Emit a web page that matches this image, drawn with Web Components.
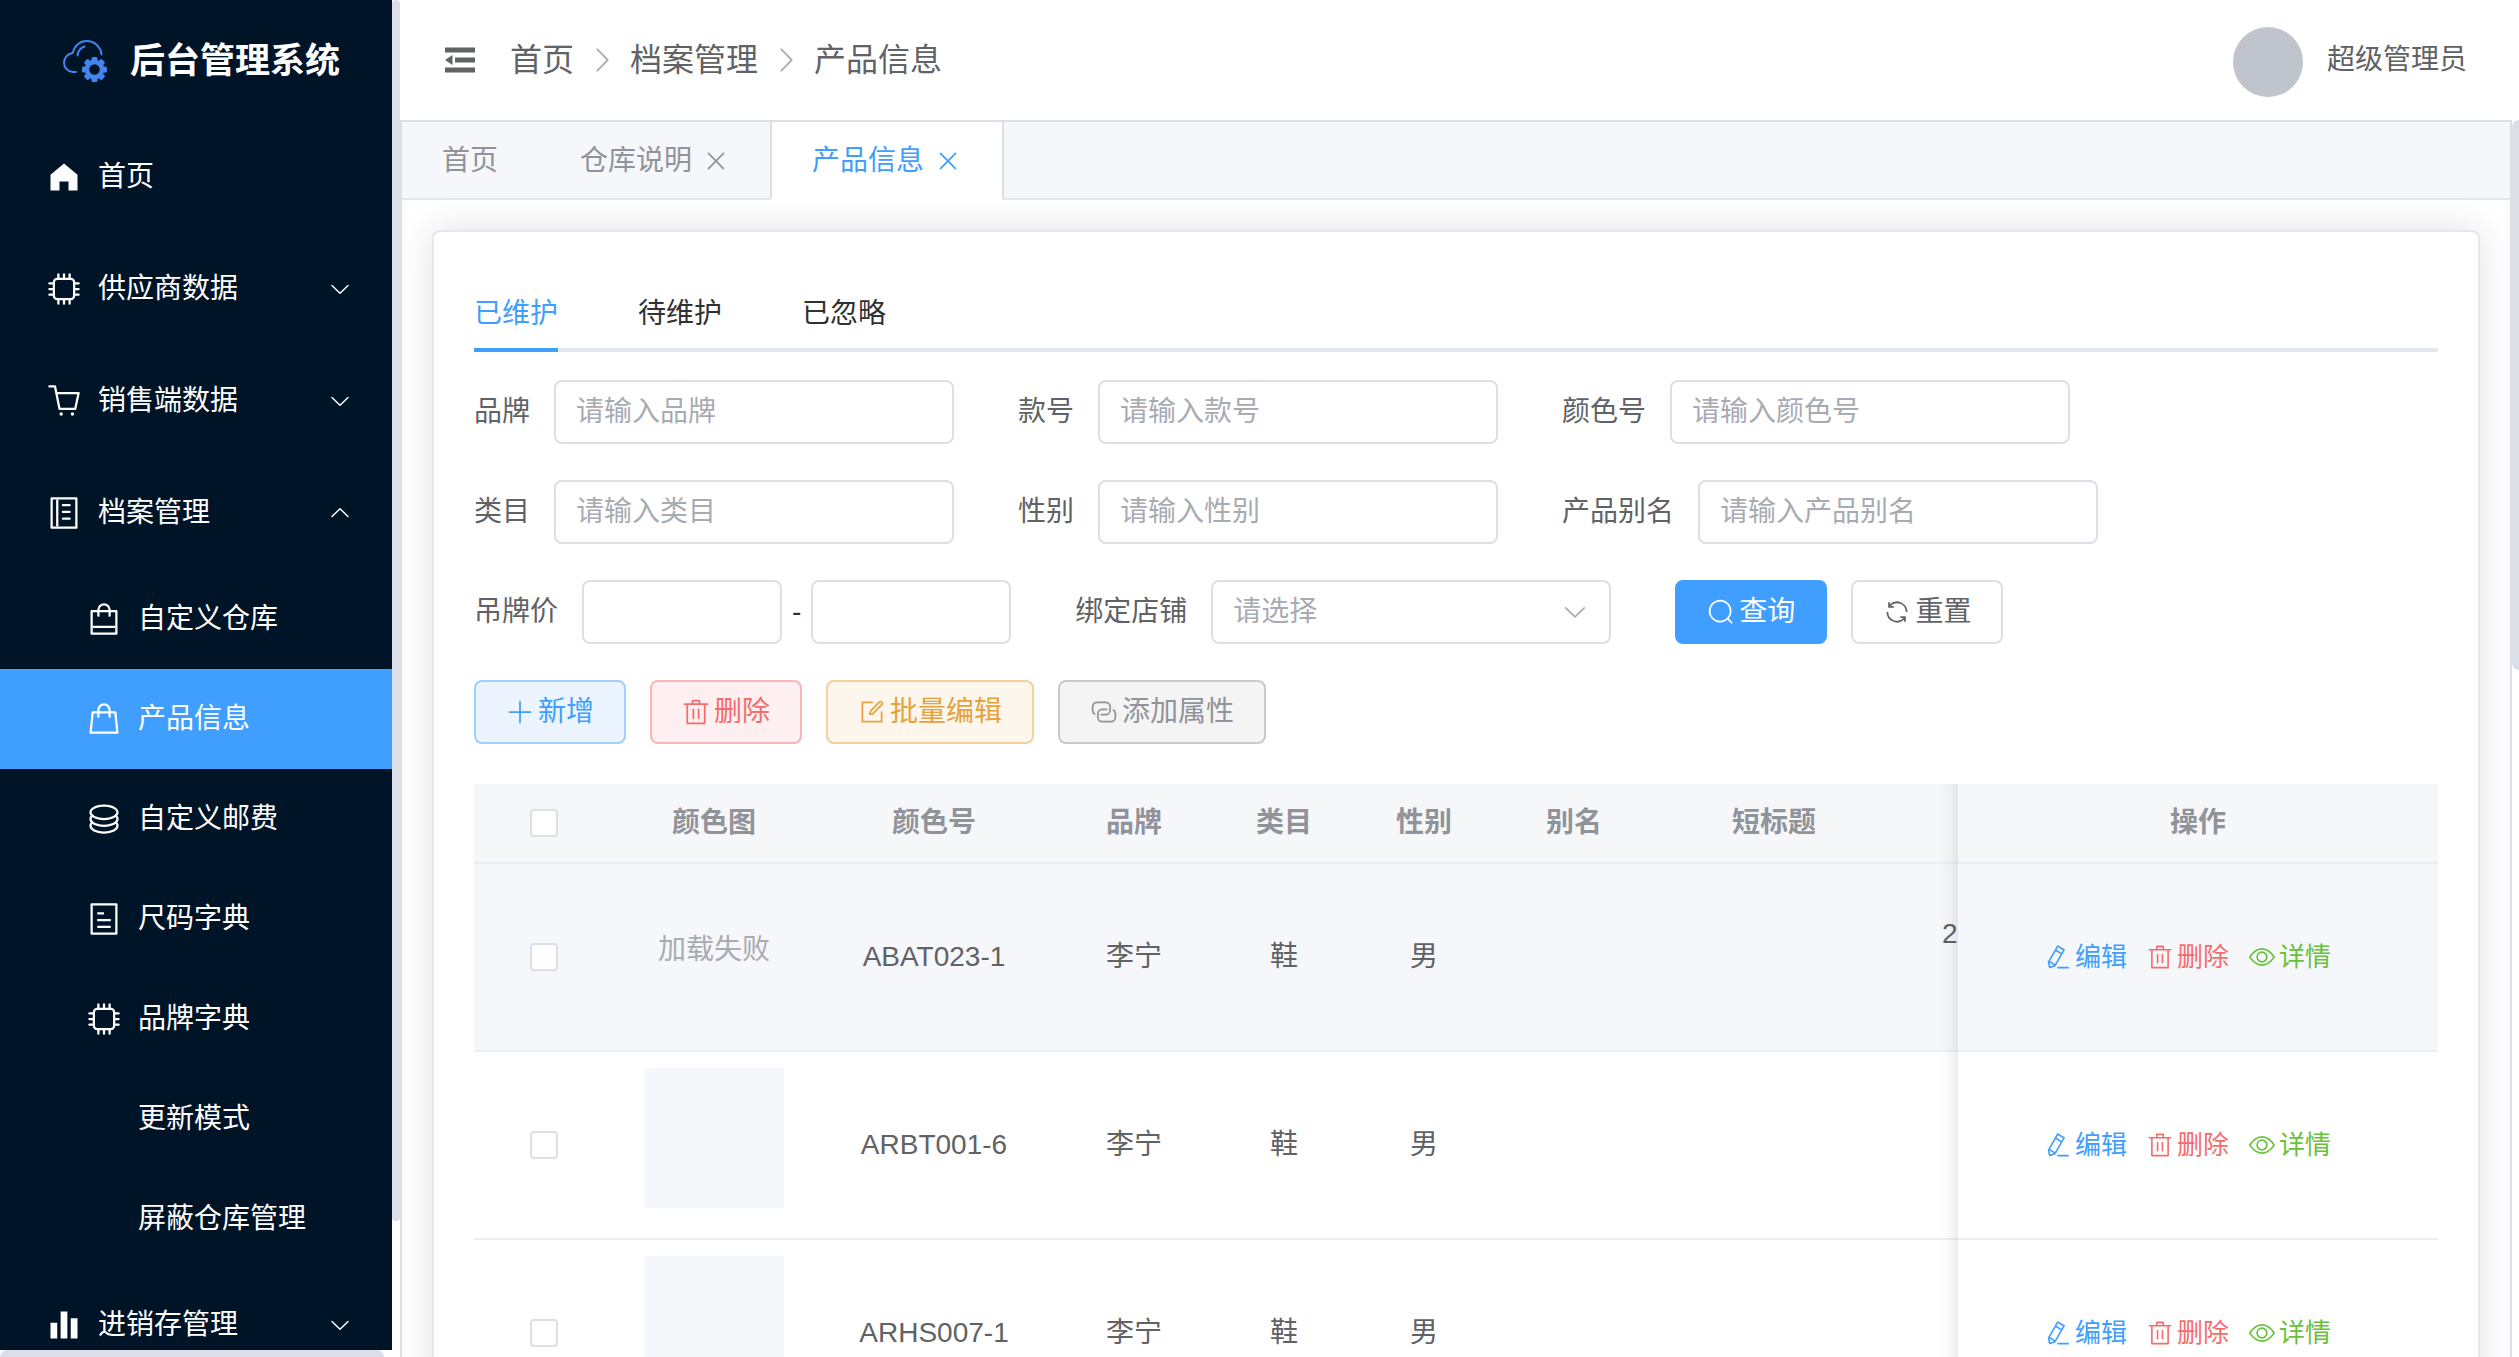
<!DOCTYPE html>
<html lang="zh-CN">
<head>
<meta charset="utf-8">
<title>后台管理系统</title>
<style>
  html, body { height: 100%; margin: 0; }
  body {
    --primary: #409eff;
    --text: #606266;
    --text-strong: #303133;
    --muted: #909399;
    --placeholder: #a8abb2;
    --line: #dcdfe6;
    --line-light: #e4e7ed;
    --line-row: #ebeef5;
    --fill: #f5f7fb;
    --thumb: #dbe0e8;
    overflow: hidden;
    background: #fff;
    color: var(--text);
    font: 28px/46px "Liberation Sans", "Noto Sans CJK SC", sans-serif;
  }
</style>
</head>
<body>
<admin-shell>
  <side-bar slot="side"></side-bar>
  <top-bar slot="top"></top-bar>
  <page-tabs slot="tabs"></page-tabs>
  <content-card>
    <status-tabs></status-tabs>
    <filter-form></filter-form>
    <product-table></product-table>
  </content-card>
</admin-shell>

<script>
const ICONS = {
  down: '<path d="M831.872 340.864 512 652.672 192.128 340.864a30.592 30.592 0 0 0-42.752 0 29.12 29.12 0 0 0 0 41.6L489.664 714.24a32 32 0 0 0 44.672 0l340.288-331.712a29.12 29.12 0 0 0 0-41.728 30.592 30.592 0 0 0-42.752 0z"/>',
  up: '<path transform="rotate(180 512 512)" d="M831.872 340.864 512 652.672 192.128 340.864a30.592 30.592 0 0 0-42.752 0 29.12 29.12 0 0 0 0 41.6L489.664 714.24a32 32 0 0 0 44.672 0l340.288-331.712a29.12 29.12 0 0 0 0-41.728 30.592 30.592 0 0 0-42.752 0z"/>',
  right: '<path d="M340.864 149.312a30.592 30.592 0 0 0 0 42.752L652.736 512 340.864 831.872a30.592 30.592 0 0 0 0 42.752 29.12 29.12 0 0 0 41.728 0L714.24 534.336a32 32 0 0 0 0-44.672L382.592 149.376a29.12 29.12 0 0 0-41.728 0z"/>',
  close: '<path d="M764.288 214.592 512 466.88 259.712 214.592a31.936 31.936 0 0 0-45.12 45.12L466.752 512 214.528 764.224a31.936 31.936 0 1 0 45.12 45.184L512 557.184l252.288 252.288a31.936 31.936 0 0 0 45.12-45.12L557.12 512.064l252.288-252.352a31.936 31.936 0 1 0-45.12-45.184z"/>',
  home: '<path d="M512 128 128 447.936V896h255.936V640H640v256h255.936V447.936z"/>',
  cpu: '<g fill="none" stroke="currentColor" stroke-width="64" stroke-linecap="round"><rect x="224" y="224" width="576" height="576" rx="96"/><path d="M352 96v112M512 96v112M672 96v112M352 928V816M512 928V816M672 928V816M96 352h112M96 512h112M96 672h112M928 352H816M928 512H816M928 672H816"/></g>',
  cart: '<path d="M432 928a48 48 0 1 1 0-96 48 48 0 0 1 0 96m320 0a48 48 0 1 1 0-96 48 48 0 0 1 0 96M96 128a32 32 0 0 1 0-64h160a32 32 0 0 1 31.36 25.728L320.64 256H928a32 32 0 0 1 31.296 38.72l-96 448A32 32 0 0 1 832 768H384a32 32 0 0 1-31.36-25.728L229.76 128zm314.24 576h395.904l82.304-384H333.44l76.8 384z"/>',
  notebook: '<path d="M192 128v768h640V128zm-32-64h704a32 32 0 0 1 32 32v832a32 32 0 0 1-32 32H160a32 32 0 0 1-32-32V96a32 32 0 0 1 32-32"/><path d="M288 128h64v768h-64zM480 256h192q32 0 32 32t-32 32H480q-32 0-32-32t32-32M480 448h192q32 0 32 32t-32 32H480q-32 0-32-32t32-32M480 640h192q32 0 32 32t-32 32H480q-32 0-32-32t32-32"/>',
  box: '<path d="M704 320v96a32 32 0 0 1-32 32h-32V320H384v128h-32a32 32 0 0 1-32-32v-96H192v576h640V320zm-384-64a192 192 0 1 1 384 0h160a32 32 0 0 1 32 32v640a32 32 0 0 1-32 32H160a32 32 0 0 1-32-32V288a32 32 0 0 1 32-32zm64 0h256a128 128 0 1 0-256 0"/><path d="M192 704h640v64H192z"/>',
  bag: '<path d="M320 288v-22.336C320 154.688 405.504 64 512 64s192 90.688 192 201.664v22.4h131.072a32 32 0 0 1 31.808 28.8l57.6 576a32 32 0 0 1-31.808 35.2H131.328a32 32 0 0 1-31.808-35.2l57.6-576a32 32 0 0 1 31.808-28.8zm64 0h256v-22.336C640 189.248 582.272 128 512 128c-70.272 0-128 61.248-128 137.664v22.4zm-64 64H217.92l-51.2 512h690.56l-51.264-512H704v96a32 32 0 1 1-64 0v-96H384v96a32 32 0 0 1-64 0z"/>',
  coin: '<path d="m161.92 580.736 29.888 58.88C171.328 659.776 160 681.728 160 704c0 82.304 155.328 160 352 160s352-77.696 352-160c0-22.272-11.392-44.16-31.808-64.32l30.464-58.432C903.936 615.808 928 657.664 928 704c0 129.728-188.544 224-416 224S96 833.728 96 704c0-46.592 24.32-88.576 65.92-123.264z"/><path d="m161.92 388.736 29.888 58.88C171.328 467.84 160 489.792 160 512c0 82.304 155.328 160 352 160s352-77.696 352-160c0-22.272-11.392-44.16-31.808-64.32l30.464-58.432C903.936 423.808 928 465.664 928 512c0 129.728-188.544 224-416 224S96 641.728 96 512c0-46.592 24.32-88.576 65.92-123.264z"/><path d="M512 544c-227.456 0-416-94.272-416-224S284.544 96 512 96s416 94.272 416 224-188.544 224-416 224m0-64c196.672 0 352-77.696 352-160S708.672 160 512 160s-352 77.696-352 160 155.328 160 352 160"/>',
  tickets: '<path d="M192 128v768h640V128zm-32-64h704a32 32 0 0 1 32 32v832a32 32 0 0 1-32 32H160a32 32 0 0 1-32-32V96a32 32 0 0 1 32-32m160 448h384v64H320zm0-192h192v64H320zm0 384h384v64H320z"/>',
  histogram: '<path d="M416 896V128h192v768zm-288 0V448h192v448zm576 0V320h192v576z"/>',
  fold: '<path d="M896 192H128v128h768zm0 256H384v128h512zm0 256H128v128h768zM320 384 128 512l192 128z"/>',
  plus: '<path d="M480 480V128a32 32 0 0 1 64 0v352h352a32 32 0 1 1 0 64H544v352a32 32 0 1 1-64 0V544H128a32 32 0 0 1 0-64z"/>',
  trash: '<path d="M160 256H96a32 32 0 0 1 0-64h256V95.936a32 32 0 0 1 32-32h256a32 32 0 0 1 32 32V192h256a32 32 0 1 1 0 64h-64v672a32 32 0 0 1-32 32H192a32 32 0 0 1-32-32zm448-64v-64H416v64zM224 896h576V256H224zm192-128a32 32 0 0 1-32-32V416a32 32 0 0 1 64 0v320a32 32 0 0 1-32 32m192 0a32 32 0 0 1-32-32V416a32 32 0 0 1 64 0v320a32 32 0 0 1-32 32"/>',
  edit: '<path d="M832 512a32 32 0 1 1 64 0v352a32 32 0 0 1-32 32H160a32 32 0 0 1-32-32V160a32 32 0 0 1 32-32h352a32 32 0 0 1 0 64H192v640h640z"/><path d="m469.952 554.24 52.8-7.552L847.104 222.4a32 32 0 1 0-45.248-45.248L477.44 501.44l-7.552 52.8zm422.4-422.4a96 96 0 0 1 0 135.808l-331.84 331.84a32 32 0 0 1-18.112 9.088L436.8 623.68a32 32 0 0 1-36.224-36.224l15.104-105.6a32 32 0 0 1 9.024-18.112l331.904-331.84a96 96 0 0 1 135.744 0z"/>',
  connection: '<path d="M640 384v64H448a128 128 0 0 0-128 128v128a128 128 0 0 0 128 128h320a128 128 0 0 0 128-128V576a128 128 0 0 0-64-110.848V394.88c74.56 26.368 128 97.472 128 181.056v128a192 192 0 0 1-192 192H448a192 192 0 0 1-192-192V576a192 192 0 0 1 192-192z"/><path d="M384 640v-64h192a128 128 0 0 0 128-128V320a128 128 0 0 0-128-128H256a128 128 0 0 0-128 128v128a128 128 0 0 0 64 110.848v70.272A192.064 192.064 0 0 1 64 448V320a192 192 0 0 1 192-192h320a192 192 0 0 1 192 192v128a192 192 0 0 1-192 192z"/>',
  search: '<path d="m795.904 750.72 124.992 124.928a32 32 0 0 1-45.248 45.248L750.656 795.904a416 416 0 1 1 45.248-45.248zM480 832a352 352 0 1 0 0-704 352 352 0 0 0 0 704"/>',
  refresh: '<path d="M771.776 794.88A384 384 0 0 1 128 512h64a320 320 0 0 0 555.712 216.448H654.72a32 32 0 1 1 0-64h149.056a32 32 0 0 1 32 32v148.928a32 32 0 1 1-64 0v-50.56zM276.288 295.616h92.992a32 32 0 0 1 0 64H220.16a32 32 0 0 1-32-32V178.56a32 32 0 0 1 64 0v50.56A384 384 0 0 1 896.128 512h-64a320 320 0 0 0-555.776-216.384z"/>',
  view: '<path d="M512 160c320 0 512 352 512 352S832 864 512 864 0 512 0 512s192-352 512-352m0 64c-225.28 0-384.128 208.064-436.8 288 52.608 79.872 211.456 288 436.8 288 225.28 0 384.128-208.064 436.8-288-52.608-79.872-211.456-288-436.8-288m0 64a224 224 0 1 1 0 448 224 224 0 0 1 0-448m0 64a160.192 160.192 0 0 0-160 160c0 88.192 71.744 160 160 160s160-71.808 160-160-71.744-160-160-160"/>',
  pen: '<path d="m199.04 672.64 193.984 112 224-387.968-193.92-112-224 388.032zm-23.872 60.16 32.896 148.288 144.896-45.696zM455.04 229.248l193.92 112 56.704-98.112-193.984-112zM104.32 708.8l384-665.024 304.768 175.936L409.152 884.8h.064l-248.448 78.336zm384 254.272v-64h448v64z"/>'
};

const define = (name, render) => customElements.define(name, class extends HTMLElement {
  connectedCallback() {
    if (this.shadowRoot) return;
    this.attachShadow({ mode: 'open' }).innerHTML =
      '<style>:host, *, ::before { box-sizing: border-box; }</style>' + render(this);
  }
});

/* One glyph, sized by font-size and coloured by color. */
define('app-icon', el => `
  <style>
    :host { display: inline-flex; width: 1em; height: 1em; flex: none; }
    svg { width: 100%; height: 100%; fill: currentColor; }
  </style>
  <svg viewBox="0 0 1024 1024" aria-hidden="true">${ICONS[el.getAttribute('name')]}</svg>`);

/* Frame: sidebar, header, and the scrolling content area. */
define('admin-shell', () => `
  <style>
    :host { display: flex; height: 100vh; }
    .side { flex: none; width: 400px; min-height: 0; }
    .main { flex: 1; min-width: 0; display: flex; flex-direction: column; }
    .scroll { flex: 1; min-height: 0; display: flex; }
    .view { flex: 1; min-width: 0; overflow: hidden; border: 2px solid var(--line); border-width: 0 2px; }
    .track { flex: none; width: 7px; display: flex; flex-direction: column; }
    .track::before { content: ""; flex: 4; border-radius: 8px 0 0 8px; background: var(--thumb); }
    .track::after { content: ""; flex: 5; }
  </style>
  <div class="side"><slot name="side"></slot></div>
  <div class="main">
    <slot name="top"></slot>
    <div class="scroll">
      <main class="view"><slot name="tabs"></slot><slot></slot></main>
      <div class="track"></div>
    </div>
  </div>`);

define('menu-entry', el => {
  const icon = el.getAttribute('icon');
  const arrow = el.getAttribute('arrow');
  const tag = arrow ? 'button' : 'a';
  return `
  <style>
    :host { display: block; height: 112px; flex: none; --indent: 40px; }
    :host([sub]) { height: 100px; --indent: 80px; }
    :host([active]) { background: var(--primary); }
    a, button {
      display: flex; align-items: center; gap: 10px; width: 100%; height: 100%;
      padding: 0 40px 0 var(--indent); border: 0; background: none;
      color: #fff; font: inherit; text-align: left; text-decoration: none;
    }
    .icon { width: 48px; display: flex; justify-content: center; font-size: 36px; }
    .name { flex: 1; }
    .arrow { font-size: 24px; }
  </style>
  <${tag} ${arrow ? 'type="button"' : 'href="#"'}>
    <span class="icon">${icon ? `<app-icon name="${icon}"></app-icon>` : ''}</span>
    <span class="name"><slot></slot></span>
    ${arrow ? `<app-icon class="arrow" name="${arrow}"></app-icon>` : ''}
  </${tag}>`;
});

define('brand-logo', () => {
  let teeth = '';
  for (let i = 0; i < 8; i++) {
    teeth += `<rect x="29.5" y="18" width="6" height="6" rx="1.5" transform="rotate(${i * 45} 32.5 30.5)"/>`;
  }
  return `
  <style>
    :host { display: block; width: 46px; height: 44px; color: #4285f0; }
    svg { display: block; width: 100%; height: 100%; }
  </style>
  <svg viewBox="0 0 46 44" aria-hidden="true">
    <g fill="none" stroke="currentColor" stroke-width="2" stroke-linecap="round">
      <path d="M14 33h-3C5.500 32.500 2 28.500 2 23.700c0-5.200 3.800-9.200 8.800-9.800C12.500 6.500 18 2 24.500 2 32.500 2 39 8 39.500 15.500"/>
      <path d="M15.500 16.500c.5-4.500 3-7.500 7-9"/>
    </g>
    <g fill="currentColor">${teeth}</g>
    <circle cx="32.5" cy="30.500" r="7.500" fill="none" stroke="currentColor" stroke-width="4.500"/>
  </svg>`;
});

define('side-bar', () => `
  <style>
    :host { display: flex; height: 100%; }
    .col { flex: 1; min-width: 0; display: flex; flex-direction: column; }
    nav { flex: 1; min-height: 0; overflow: hidden; display: flex; flex-direction: column; background: #001428; }
    .brand {
      flex: none; height: 121px; display: flex; align-items: center; gap: 22px; padding: 0 0 0 62px;
      color: #fff; font-size: 35px; font-weight: 700;
    }
    .bottom { flex: none; height: 7px; margin-right: 8px; border-radius: 8px 8px 0 0; background: var(--thumb); }
    .track { flex: none; width: 8px; display: flex; flex-direction: column; }
    .track::before { content: ""; flex: 9; border-radius: 8px; background: var(--thumb); }
    .track::after { content: ""; flex: 1; }
  </style>
  <div class="col">
    <nav>
      <div class="brand"><brand-logo></brand-logo><span>后台管理系统</span></div>
      <menu-entry icon="home">首页</menu-entry>
      <menu-entry icon="cpu" arrow="down">供应商数据</menu-entry>
      <menu-entry icon="cart" arrow="down">销售端数据</menu-entry>
      <menu-entry icon="notebook" arrow="up">档案管理</menu-entry>
      <menu-entry sub icon="box">自定义仓库</menu-entry>
      <menu-entry sub active icon="bag">产品信息</menu-entry>
      <menu-entry sub icon="coin">自定义邮费</menu-entry>
      <menu-entry sub icon="tickets">尺码字典</menu-entry>
      <menu-entry sub icon="cpu">品牌字典</menu-entry>
      <menu-entry sub>更新模式</menu-entry>
      <menu-entry sub>屏蔽仓库管理</menu-entry>
      <menu-entry icon="histogram" arrow="down">进销存管理</menu-entry>
    </nav>
    <div class="bottom"></div>
  </div>
  <div class="track"></div>`);

define('top-bar', () => `
  <style>
    :host { display: flex; align-items: center; flex: none; height: 120px; padding: 0 52px 0 40px; }
    .fold { display: flex; margin-right: 30px; padding: 0; border: 0; background: none; color: var(--text); font-size: 40px; }
    nav { display: flex; align-items: center; gap: 12px; flex: 1; font-size: 32px; }
    nav app-icon { color: var(--placeholder); }
    a { color: var(--text); text-decoration: none; }
    .avatar { width: 70px; height: 70px; margin: 4px 24px 0 0; border-radius: 50%; background: #c0c4cc; }
  </style>
  <button class="fold" type="button" aria-label="折叠菜单"><app-icon name="fold"></app-icon></button>
  <nav>
    <a href="#">首页</a><app-icon name="right"></app-icon>
    <a href="#">档案管理</a><app-icon name="right"></app-icon>
    <span>产品信息</span>
  </nav>
  <span class="avatar"></span>
  <span>超级管理员</span>`);

define('page-tabs', () => `
  <style>
    :host {
      display: flex; height: 80px; background: var(--fill);
      border-top: 2px solid var(--line); border-bottom: 2px solid var(--line-light);
    }
    .tab {
      display: flex; align-items: center; gap: 10px; padding: 2px 40px 0; margin: 0 0 -2px -2px;
      border: 2px solid transparent; border-width: 0 2px 2px; color: var(--muted);
    }
    .tab.on { background: #fff; color: var(--primary); border-color: #fff var(--line) #fff; }
    a { color: inherit; text-decoration: none; }
    button { display: flex; padding: 0; border: 0; background: none; color: inherit; font-size: 28px; }
  </style>
  <div class="tab"><a href="#">首页</a></div>
  <div class="tab"><a href="#">仓库说明</a><button type="button" aria-label="关闭"><app-icon name="close"></app-icon></button></div>
  <div class="tab on"><a href="#">产品信息</a><button type="button" aria-label="关闭"><app-icon name="close"></app-icon></button></div>`);

define('content-card', () => `
  <style>
    :host {
      display: block; margin: 30px; padding: 40px; border: 2px solid var(--line-light); border-radius: 8px;
      background: #fff; box-shadow: 0 0 36px rgba(0, 0, 0, .12);
    }
  </style>
  <slot></slot>`);

define('status-tabs', () => `
  <style>
    :host { display: flex; gap: 80px; height: 80px; box-shadow: inset 0 -4px var(--line-light); }
    button { padding: 4px 0 0; border: 0; background: none; color: var(--text-strong); font: inherit; }
    .on { color: var(--primary); box-shadow: inset 0 -4px var(--primary); }
  </style>
  <button type="button" class="on">已维护</button>
  <button type="button">待维护</button>
  <button type="button">已忽略</button>`);

/* Labelled control; kind is text, range or select. */
define('form-field', el => {
  const hint = el.getAttribute('hint') || '';
  const kind = el.getAttribute('kind') || 'text';
  const body = {
    text: `<input id="f" type="text" placeholder="${hint}">`,
    range: '<div class="range"><input id="f" type="text"><span>-</span><input type="text" aria-label="最高价"></div>',
    select: `<div class="pick"><select id="f"><option>${hint}</option></select><app-icon name="down"></app-icon></div>`
  }[kind];
  return `
  <style>
    :host { display: flex; align-items: center; gap: 24px; }
    input, select {
      width: 400px; height: 64px; padding: 0 20px; border: 2px solid var(--line); border-radius: 8px;
      background: #fff; color: var(--text); font: inherit; appearance: none;
    }
    input::placeholder { color: var(--placeholder); opacity: 1; }
    select { color: var(--placeholder); }
    .range { display: flex; align-items: center; gap: 10px; color: var(--text-strong); }
    .range input { width: 200px; }
    .pick { display: grid; align-items: center; color: var(--placeholder); }
    .pick > * { grid-area: 1 / 1; }
    .pick app-icon { justify-self: end; margin-right: 22px; pointer-events: none; }
  </style>
  <label for="f">${el.getAttribute('label')}</label>${body}`;
});

define('action-button', el => `
  <style>
    :host { display: block; --bg: #fff; --bd: var(--line); --fg: var(--text); }
    :host([type=solid]) { --bg: var(--primary); --bd: var(--primary); --fg: #fff; }
    :host([type=primary]) { --bg: #ecf5ff; --bd: #a0cfff; --fg: var(--primary); }
    :host([type=danger]) { --bg: #fef0f0; --bd: #fab6b6; --fg: #f56c6c; }
    :host([type=warning]) { --bg: #fdf6ec; --bd: #f3d19e; --fg: #e6a23c; }
    :host([type=info]) { --bg: #f4f4f5; --bd: #c8c9cc; --fg: #909399; }
    button {
      display: flex; align-items: center; gap: 4px; height: 64px; padding: 0 30px;
      border: 2px solid var(--bd); border-radius: 8px; background: var(--bg); color: var(--fg); font: inherit;
    }
  </style>
  <button type="button"><app-icon name="${el.getAttribute('icon')}"></app-icon><span><slot></slot></span></button>`);

define('filter-form', () => `
  <style>
    :host { display: block; margin: 28px 0 40px; }
    form { display: flex; flex-direction: column; gap: 36px; }
    .row { display: flex; gap: 64px; }
    .buttons { display: flex; gap: 24px; }
  </style>
  <form>
    <div class="row">
      <form-field label="品牌" hint="请输入品牌"></form-field>
      <form-field label="款号" hint="请输入款号"></form-field>
      <form-field label="颜色号" hint="请输入颜色号"></form-field>
    </div>
    <div class="row">
      <form-field label="类目" hint="请输入类目"></form-field>
      <form-field label="性别" hint="请输入性别"></form-field>
      <form-field label="产品别名" hint="请输入产品别名"></form-field>
    </div>
    <div class="row">
      <form-field label="吊牌价" kind="range"></form-field>
      <form-field label="绑定店铺" kind="select" hint="请选择"></form-field>
      <div class="buttons">
        <action-button type="solid" icon="search">查询</action-button>
        <action-button icon="refresh">重置</action-button>
      </div>
    </div>
    <div class="buttons">
      <action-button type="primary" icon="plus">新增</action-button>
      <action-button type="danger" icon="trash">删除</action-button>
      <action-button type="warning" icon="edit">批量编辑</action-button>
      <action-button type="info" icon="connection">添加属性</action-button>
    </div>
  </form>`);

define('row-link', el => `
  <style>
    :host { display: inline-flex; margin-right: 20px; font-size: 26px; }
    a { display: flex; align-items: center; gap: 4px; color: inherit; text-decoration: none; }
  </style>
  <a href="#"><app-icon name="${el.getAttribute('icon')}"></app-icon><span><slot></slot></span></a>`);

define('product-table', () => {
  const rows = [
    { code: 'ABAT023-1', image: '加载失败', extra: '<div>2</div><div>&nbsp;</div>', hover: true },
    { code: 'ARBT001-6', image: '', extra: '' },
    { code: 'ARHS007-1', image: '', extra: '' }
  ];
  return `
  <style>
    :host { display: block; overflow: hidden; }
    table { width: 100%; table-layout: fixed; border-collapse: separate; border-spacing: 0; text-align: center; }
    th, td { padding: 16px 0; border-bottom: 2px solid var(--line-row); background: #fff; }
    th { background: #f5f7f9; color: var(--muted); font-weight: 700; }
    .hover td { background: var(--fill); }
    .fixed { position: sticky; right: 0; z-index: 1; }
    .fixed::before {
      content: ""; position: absolute; top: 0; bottom: -2px; left: -20px; width: 20px;
      box-shadow: inset -20px 0 20px -20px rgba(0, 0, 0, .15);
    }
    .extra { padding-left: 48px; text-align: left; }
    input {
      display: block; width: 28px; height: 28px; margin: 0 auto; appearance: none;
      border: 2px solid var(--line); border-radius: 4px; background: #fff;
    }
    .pic {
      display: flex; align-items: center; justify-content: center; width: 140px; height: 140px;
      margin: 0 auto 14px; background: var(--fill); color: var(--placeholder);
    }
    .ops { display: flex; justify-content: center; }
    .edit { color: var(--primary); } .del { color: #f56c6c; } .view { color: #67c23a; }
  </style>
  <table>
    <colgroup>
      ${[140, 200, 240, 160, 140, 140, 160, 240, 240, 480].map(w => `<col style="width:${w}px">`).join('')}
    </colgroup>
    <thead><tr>
      <th><input type="checkbox" aria-label="全选"></th>
      <th>颜色图</th><th>颜色号</th><th>品牌</th><th>类目</th><th>性别</th><th>别名</th><th>短标题</th><th></th>
      <th class="fixed">操作</th>
    </tr></thead>
    <tbody>${rows.map(r => `
      <tr class="${r.hover ? 'hover' : ''}">
        <td><input type="checkbox" aria-label="选择 ${r.code}"></td>
        <td><div class="pic">${r.image}</div></td>
        <td>${r.code}</td><td>李宁</td><td>鞋</td><td>男</td><td></td><td></td>
        <td class="extra">${r.extra}</td>
        <td class="fixed"><div class="ops">
          <row-link class="edit" icon="pen">编辑</row-link>
          <row-link class="del" icon="trash">删除</row-link>
          <row-link class="view" icon="view">详情</row-link>
        </div></td>
      </tr>`).join('')}
    </tbody>
  </table>`;
});
</script>
</body>
</html>
